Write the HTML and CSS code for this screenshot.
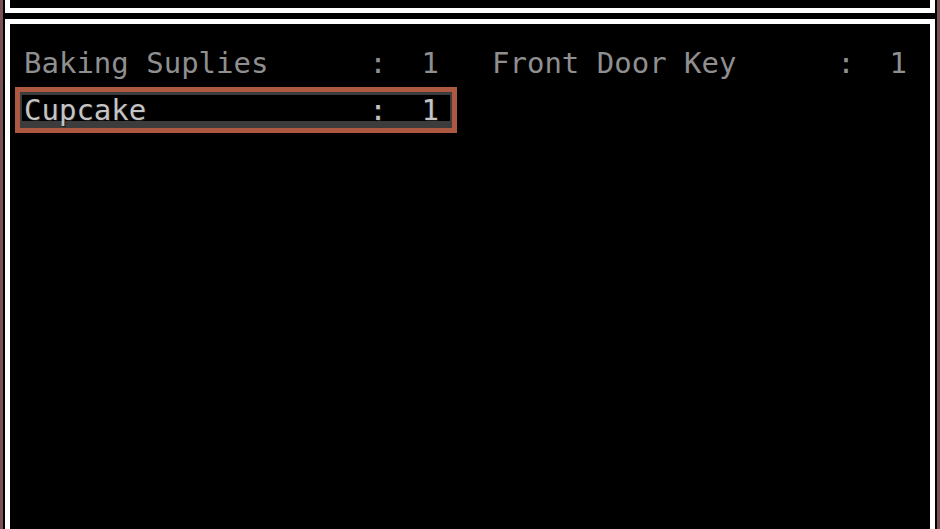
FILE: index.html
```html
<!DOCTYPE html>
<html>
<head>
<meta charset="utf-8">
<link rel="stylesheet" href="styles.css">
</head>
<body>
<div class="frame">
  <div class="inner">
    <div class="panel panel-top"></div>
    <div class="panel panel-main">
      <div class="items">
        <div class="item"><span class="name">Baking Suplies</span><span class="qty">:  1</span></div>
        <div class="item"><span class="name">Front Door Key</span><span class="qty">:  1</span></div>
        <div class="item selected"><span class="name">Cupcake</span><span class="qty">:  1</span></div>
      </div>
    </div>
  </div>
</div>
</body>
</html>
```
FILE: styles.css
```css
html, body {
  margin: 0;
  padding: 0;
  background: #000;
  width: 940px;
  height: 529px;
  overflow: hidden;
}
.frame {
  background: #7a5256;
  padding: 0 3px;
  height: 529px;
  box-sizing: border-box;
}
.inner {
  background: #000;
  padding: 0 2px;
  height: 100%;
  display: flex;
  flex-direction: column;
  gap: 6px;
}
.panel {
  border: 5px solid #fff;
  background: #000;
}
.panel-top {
  border-top: none;
  height: 8px;
  flex: none;
}
.panel-main {
  border-bottom: none;
  flex: 1;
  padding: 16px 5px 0 5px;
}
.items {
  display: grid;
  grid-template-columns: 442px 442px;
  column-gap: 26px;
  row-gap: 1px;
}
.item {
  display: flex;
  box-sizing: border-box;
  height: 46px;
  border: 5px solid transparent;
  padding: 0 13px 0 4px;
  font-family: "DejaVu Sans Mono", monospace;
  font-size: 29px;
  line-height: 37px;
  color: #8f8f8f;
  white-space: pre;
  overflow: hidden;
}
.name {
  flex: 1;
}
.selected {
  border-color: #ad5840;
  background: linear-gradient(to bottom, #3c3c3c 0, #3c3c3c 3px, #000 3px, #000 calc(100% - 7px), #3c3c3c calc(100% - 7px));
  box-shadow: inset 2px 0 0 #3c3c3c, inset -2px 0 0 #3c3c3c;
  color: #c4c4c4;
  text-shadow: 1px 1px 0 #1a1a1a;
}
```
